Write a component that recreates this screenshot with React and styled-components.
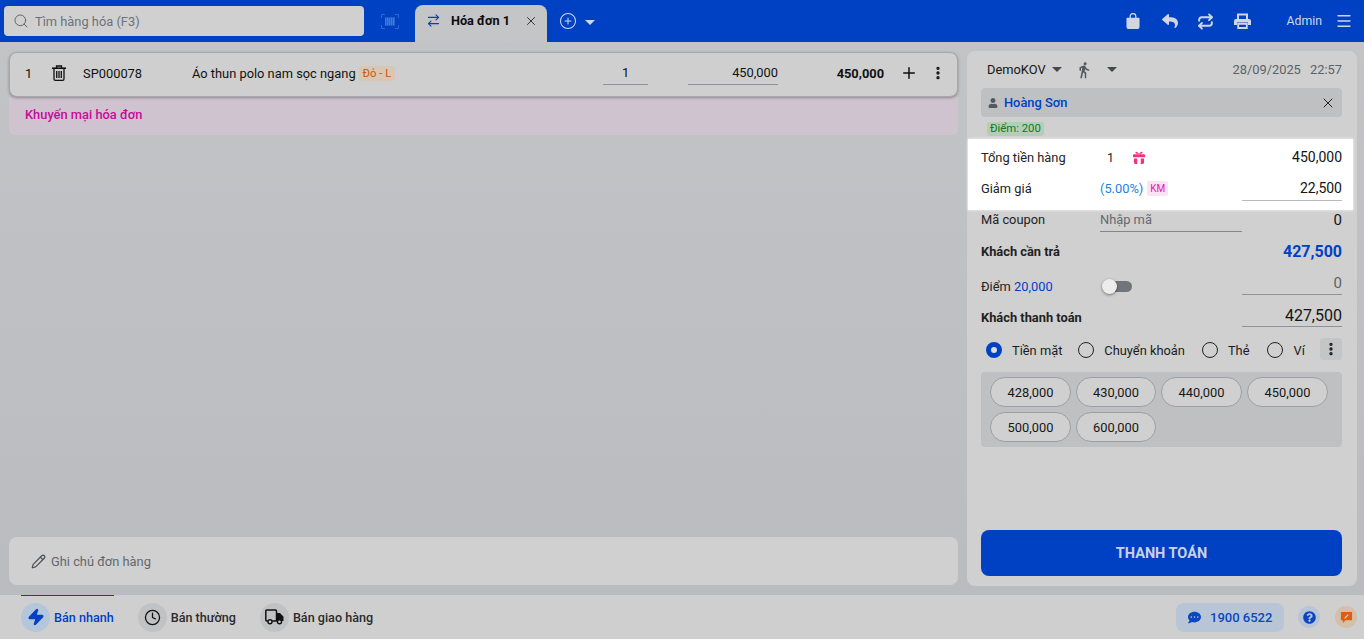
import React from 'react';
import styled, { createGlobalStyle } from 'styled-components';
import {
  Search, ArrowRightLeft, X, CirclePlus, Menu, Plus, EllipsisVertical, Pencil, Clock, Repeat, Zap,
} from 'lucide-react';
import { FaReply, FaUser, FaCommentDots, FaQuestionCircle } from 'react-icons/fa';
import { MdDirectionsWalk } from 'react-icons/md';

const GlobalStyle = createGlobalStyle`
  html, body { margin: 0; padding: 0; height: 100%; overflow: hidden; }
  body { font-family: Roboto, "Liberation Sans", sans-serif; font-size: 12.85px; color: #111; }
  * { box-sizing: border-box; }
`;

const Page = styled.div`
  width: 1364px;
  height: 639px;
  display: flex;
  flex-direction: column;
  background: linear-gradient(#c3c4c6, #babbbe);
`;

const Header = styled.header`
  height: 42px;
  flex: none;
  background: #0041c4;
  display: flex;
  align-items: flex-start;
  padding: 6px 0 0 4px;
`;

const SearchBox = styled.div`
  width: 360px;
  height: 30px;
  background: #d0d0d0;
  border-radius: 4px;
  display: flex;
  align-items: center;
  gap: 6px;
  padding-left: 9px;
  color: #6d7278;
  svg { color: #5f656b; }
`;

const BarcodeWrap = styled.div`
  width: 51px;
  height: 30px;
  display: flex;
  align-items: center;
  justify-content: center;
`;

const Tab = styled.div`
  width: 132px;
  height: 37px;
  margin-top: -1px;
  background: #c4c5c7;
  border-radius: 8px 8px 0 0;
  display: flex;
  align-items: center;
  padding: 0 9px 6px 11px;
  font-weight: 700;
  font-size: 12.7px;
  color: #0c0c0c;
  svg:first-child { color: #0041c4; margin-right: 10px; }
  svg:last-child { color: #222; margin-left: auto; }
`;

const AddTab = styled.div`
  display: flex;
  align-items: center;
  gap: 8px;
  margin: 6px 0 0 12px;
  color: #d0d6e8;
`;

const Caret = styled.span`
  width: 0;
  height: 0;
  flex: none;
  margin: ${p => p.$m || 0};
  border-left: 5px solid transparent;
  border-right: 5px solid transparent;
  border-top: 5px solid ${p => p.$color || '#44484d'};
`;

const HeadRight = styled.div`
  margin-left: auto;
  display: flex;
  align-items: center;
  height: 30px;
  color: #d2d6e2;
  padding-right: 11px;
`;

const HeadIcon = styled.span`
  display: flex;
  width: 20px;
  justify-content: center;
  margin-right: ${p => p.$gap}px;
`;

const AdminText = styled.span`
  font-size: 12.3px;
  margin-right: 13px;
`;

const Content = styled.main`
  flex: 1;
  display: flex;
  min-height: 0;
  padding: 9px 7px 9px 9px;
  gap: 9px;
`;

const LeftCol = styled.section`
  width: 949px;
  display: flex;
  flex-direction: column;
`;

const ItemRow = styled.div`
  height: 45px;
  margin-top: 1px;
  flex: none;
  background: #cfcfcf;
  border-radius: 8px;
  border: 1px solid #a6a8ac;
  box-shadow: 0 1px 3px rgba(0, 0, 0, 0.3);
  display: flex;
  align-items: center;
  padding: 0 0 3px 15px;
  position: relative;
`;

const Cell = styled.div`
  width: ${p => p.$w}px;
  flex: none;
  display: flex;
  align-items: center;
  justify-content: ${p => p.$end ? 'flex-end' : 'flex-start'};
  font-weight: ${p => p.$bold ? 700 : 400};
`;

const UnderCell = styled.div`
  width: ${p => p.$w}px;
  margin-left: ${p => p.$ml || 0}px;
  height: 24px;
  flex: none;
  border-bottom: 1px solid #8f9398;
  text-align: ${p => p.$align};
  line-height: 24px;
`;

const VariantTag = styled.span`
  background: #d9c7b6;
  color: #c9590a;
  border-radius: 3px;
  font-size: 11.2px;
  padding: 1px 4px;
  margin-left: 3px;
`;

const Promo = styled.div`
  height: 38px;
  flex: none;
  background: #cfc3cf;
  border-radius: 0 0 6px 6px;
  color: #c80a9a;
  font-weight: 500;
  display: flex;
  align-items: center;
  padding: 0 0 4px 16px;
`;

const Note = styled.div`
  margin: auto 0 1px;
  height: 48px;
  background: #d0d0d0;
  border-radius: 8px;
  display: flex;
  align-items: center;
  gap: 5px;
  padding-left: 22px;
  color: #62676d;
  svg { color: #4e5358; }
`;

const RightCol = styled.aside`
  width: 390px;
  background: #d0d0d0;
  border-radius: 8px;
  padding: 0 15px 10px 14px;
  display: flex;
  flex-direction: column;
`;

const SellerRow = styled.div`
  height: 37px;
  display: flex;
  align-items: center;
  padding-left: 6px;
  color: #161616;
  svg { color: #55595f; margin-left: 13px; }
`;

const DateText = styled.span`
  margin-left: auto;
  color: #5c6167;
  word-spacing: 6px;
`;

const Customer = styled.div`
  height: 29px;
  background: #bfc0c2;
  border-radius: 4px;
  display: flex;
  align-items: center;
  padding: 0 6px 0 7px;
  gap: 6px;
  color: #0041c4;
  font-weight: 500;
  svg:first-child { color: #55595f; }
  svg:last-child { margin-left: auto; color: #222; }
`;

const Points = styled.span`
  align-self: flex-start;
  margin: 5px 0 0 6px;
  height: 14px;
  line-height: 14px;
  padding: 0 3px;
  background: #b5cdb8;
  color: #0a7a24;
  font-size: 11.3px;
  border-radius: 3px;
`;

const Spotlight = styled.div`
  background: #fff;
  margin: 3px -11px 0 -13px;
  padding: 0 11px 0 13px;
  height: 71px;
  box-shadow: 0 0 3px rgba(255, 255, 255, 0.8);
`;

const SumRow = styled.div`
  display: grid;
  grid-template-columns: 119px 142px 100px;
  align-items: center;
  height: ${p => p.$h}px;
  margin-top: ${p => p.$mt || 0}px;
  padding-bottom: ${p => p.$pb || 0}px;
`;

const Label = styled.span`
  font-weight: ${p => p.$bold ? 700 : 400};
  color: #222;
`;

const Blue = styled.span`
  color: #0041c4;
`;

const Middle = styled.div`
  display: flex;
  align-items: center;
  color: #1d1d1d;
`;

const Qty = styled.span`
  width: 33px;
  padding-left: 7px;
  font-size: 12.5px;
`;

const Percent = styled.span`
  color: #1e7fe0;
`;

const KmTag = styled.span`
  background: #fbe3f5;
  color: #e515ae;
  font-size: 10px;
  padding: 2px 3px;
  border-radius: 2px;
  margin-left: 4px;
`;

const Value = styled.div`
  text-align: right;
  font-size: ${p => p.$size || 14}px;
  font-weight: ${p => p.$bold ? 700 : 400};
  color: ${p => p.$color || '#141414'};
  margin: ${p => p.$mt || 0}px 0 ${p => p.$mb || 0}px;
  padding-bottom: ${p => p.$pb || 0}px;
  ${p => p.$line && `border-bottom: 1px solid ${p.$line};`}
`;

const CouponInput = styled.div`
  height: 25px;
  line-height: 25px;
  border-bottom: 1px solid #83878c;
  color: #64696f;
`;

const SwitchTrack = styled.div`
  position: relative;
  width: 26px;
  height: 11px;
  margin-left: 6px;
  border-radius: 6px;
  background: #70757b;
`;

const SwitchThumb = styled.span`
  position: absolute;
  left: -4px;
  top: -2px;
  width: 15px;
  height: 15px;
  border-radius: 50%;
  background: #ececec;
  box-shadow: 0 1px 3px rgba(0, 0, 0, 0.45);
`;

const Methods = styled.div`
  display: flex;
  align-items: center;
  height: 36px;
  padding-left: 5px;
  margin-top: 2px;
  color: #1b1b1b;
`;

const Radio = styled.span`
  width: 16px;
  height: 16px;
  border-radius: 50%;
  flex: none;
  margin: 0 10px 0 ${p => p.$ml || 0}px;
  border: ${p => p.$on ? '5px solid #0041c4' : '1.3px solid #222'};
  background: ${p => p.$on ? '#dcdcdc' : 'transparent'};
`;

const MoreBtn = styled.span`
  margin: -2px 0 0 auto;
  width: 22px;
  height: 22px;
  background: #c4c5c7;
  border-radius: 3px;
  display: flex;
  align-items: center;
  justify-content: center;
`;

const ChipBox = styled.div`
  margin-top: 4px;
  height: 75px;
  background: #bfc0c2;
  border-radius: 4px;
  padding: 5px 9px;
  display: grid;
  grid-template-columns: 81px 80px 81px 81px;
  grid-auto-rows: 30px;
  gap: 5px;
`;

const Chip = styled.div`
  border: 1px solid #9d9fa3;
  border-radius: 15px;
  background: #d0d0d0;
  display: flex;
  align-items: center;
  justify-content: center;
  color: #161616;
`;

const PayButton = styled.button`
  margin-top: auto;
  height: 46px;
  border: none;
  border-radius: 8px;
  background: #0041c4;
  color: #c9d2e4;
  font-family: inherit;
  font-weight: 700;
  font-size: 14.5px;
`;

const Footer = styled.footer`
  height: 44px;
  flex: none;
  background: #cfcfcf;
  display: flex;
  align-items: center;
  padding: 0 7px 0 21px;
  position: relative;
`;

const ActiveLine = styled.span`
  position: absolute;
  left: 21px;
  top: 0;
  width: 93px;
  height: 1px;
  background: #0041c4;
`;

const Mode = styled.div`
  display: flex;
  align-items: center;
  gap: 4px;
  margin-right: 24px;
  font-size: 12.6px;
  font-weight: 500;
  color: ${p => p.$active ? '#0041c4' : '#2b2b2b'};
`;

const ModeIcon = styled.span`
  width: 29px;
  height: 29px;
  border-radius: 50%;
  display: flex;
  align-items: center;
  justify-content: center;
  background: ${p => p.$active ? '#b3c6dc' : '#c1c2c3'};
  color: ${p => p.$active ? '#0041c4' : '#111'};
`;

const Hotline = styled.div`
  margin-left: auto;
  width: 108px;
  height: 29px;
  border-radius: 8px;
  background: #b7c5d6;
  color: #0d47c0;
  display: flex;
  align-items: center;
  gap: 9px;
  padding-left: 12px;
  font-weight: 500;
  font-size: 13px;
`;

const RoundBtn = styled.span`
  width: 22px;
  height: 22px;
  border-radius: 50%;
  margin-left: ${p => p.$ml}px;
  background: ${p => p.$bg};
  color: ${p => p.$color};
  display: flex;
  align-items: center;
  justify-content: center;
`;

const Barcode = () => (
  <svg width="18" height="15" viewBox="0 0 18 15" fill="none" stroke="#2a68cc" strokeWidth="1">
    <path d="M.5 4V.5H4M14 .5h3.5V4M17.5 11v3.5H14M4 14.5H.5V11" />
    <rect x="4" y="3.5" width="10" height="8" fill="#3f7cd6" stroke="none" />
    <path d="M5.5 3.5v8M7.5 3.5v8M9.5 3.5v8M11.5 3.5v8M13.5 3.5v8" stroke="#1450c8" strokeWidth=".6" />
  </svg>
);

const Bag = () => (
  <svg width="14" height="16" viewBox="0 0 15 17">
    <path d="M4.5 6V3.5a3 3 0 0 1 6 0V6" fill="none" stroke="currentColor" strokeWidth="1.4" />
    <path d="M1.5 5h12a1 1 0 0 1 1 1v9a2 2 0 0 1-2 2h-10a2 2 0 0 1-2-2V6a1 1 0 0 1 1-1z" fill="currentColor" />
  </svg>
);

const Printer = () => (
  <svg width="17" height="16" viewBox="0 0 17 16">
    <path d="M4 6V1.5h9V6" fill="none" stroke="currentColor" strokeWidth="2" />
    <path d="M2 6h13a2 2 0 0 1 2 2v4h-3V9.5H3V12H0V8a2 2 0 0 1 2-2z" fill="currentColor" />
    <path d="M4.2 10.8h8.6V15H4.2z" fill="none" stroke="currentColor" strokeWidth="1.8" />
  </svg>
);

const Trash = () => (
  <svg width="16" height="16" viewBox="0 0 16 16" fill="none" stroke="#111" strokeWidth="1.3">
    <path d="M1 3.2h14" strokeWidth="1.6" />
    <path d="M5.5 3V1h5v2" />
    <path d="M3 3.5V14a1.3 1.3 0 0 0 1.3 1.3h7.4A1.3 1.3 0 0 0 13 14V3.5" />
    <path d="M5.7 6v7M8 6v7M10.3 6v7" />
  </svg>
);

const Gift = () => (
  <svg width="12" height="13" viewBox="0 0 13 14" fill="#f4307f">
    <path d="M6.5 3.2C5 1 3.6.2 2.8 1c-.8.9.6 2 3 2.3zM6.5 3.2C8 1 9.4.2 10.2 1c.8.9-.6 2-3 2.3z" />
    <path d="M1 3.6h11a1 1 0 0 1 1 1v2.2H0V4.6a1 1 0 0 1 1-1z" />
    <path d="M1 8h3.6v6H2.5A1.5 1.5 0 0 1 1 12.5zM8.4 8H12v4.5a1.5 1.5 0 0 1-1.5 1.5H8.4z" />
  </svg>
);

const TruckIcon = () => (
  <svg width="19" height="16" viewBox="0 0 19 16">
    <path d="M11.5 12H1.8a1 1 0 0 1-1-1V2a1 1 0 0 1 1-1h8.7a1 1 0 0 1 1 1z" fill="none" stroke="#111" strokeWidth="1.5" />
    <path d="M11.5 4H15l3.5 3.8V12h-7z" fill="#111" />
    <circle cx="5" cy="12.8" r="2" fill="#cfcfcf" stroke="#111" strokeWidth="1.4" />
    <circle cx="14.5" cy="12.8" r="2" fill="#cfcfcf" stroke="#111" strokeWidth="1.4" />
  </svg>
);

const ReportIcon = () => (
  <svg width="13" height="13" viewBox="0 0 14 14">
    <path d="M1 1h12v9H6l-3 3v-3H1z" fill="#d9600f" />
    <path d="M5 8l4-4" stroke="#f5d9c2" strokeWidth="1.2" />
  </svg>
);

const amounts = ['428,000', '430,000', '440,000', '450,000', '500,000', '600,000'];

export default function App() {
  return (
    <Page>
      <GlobalStyle />
      <Header>
        <SearchBox>
          <Search size={16} strokeWidth={1.5} />
          Tìm hàng hóa (F3)
        </SearchBox>
        <BarcodeWrap><Barcode /></BarcodeWrap>
        <Tab>
          <ArrowRightLeft size={15} strokeWidth={1.8} />
          Hóa đơn 1
          <X size={14} strokeWidth={1.5} />
        </Tab>
        <AddTab>
          <CirclePlus size={18} strokeWidth={1.4} />
          <Caret $color="#d0d6e8" $m="3px 0 0 0" />
        </AddTab>
        <HeadRight>
          <HeadIcon $gap={17}><Bag /></HeadIcon>
          <HeadIcon $gap={15}><FaReply size={16} /></HeadIcon>
          <HeadIcon $gap={17}><Repeat size={17} strokeWidth={2.7} /></HeadIcon>
          <HeadIcon $gap={34}><Printer /></HeadIcon>
          <AdminText>Admin</AdminText>
          <Menu size={18} strokeWidth={1.7} />
        </HeadRight>
      </Header>
      <Content>
        <LeftCol>
          <ItemRow>
            <Cell $w={26}>1</Cell>
            <Cell $w={32}><Trash /></Cell>
            <Cell $w={109}>SP000078</Cell>
            <Cell $w={411}>
              Áo thun polo nam sọc ngang
              <VariantTag>Đỏ - L</VariantTag>
            </Cell>
            <UnderCell $w={45} $align="center">1</UnderCell>
            <UnderCell $w={90} $ml={40} $align="right">450,000</UnderCell>
            <Cell $w={106} $end $bold>450,000</Cell>
            <Cell $w={34} $end><Plus size={18} strokeWidth={2} /></Cell>
            <Cell $w={28} $end><EllipsisVertical size={16} strokeWidth={3} /></Cell>
          </ItemRow>
          <Promo>Khuyến mại hóa đơn</Promo>
          <Note>
            <Pencil size={15} strokeWidth={2} />
            Ghi chú đơn hàng
          </Note>
        </LeftCol>
        <RightCol>
          <SellerRow>
            DemoKOV
            <Caret $m="0 0 0 6px" />
            <MdDirectionsWalk size={18} />
            <Caret $m="0 0 0 14px" />
            <DateText>28/09/2025 22:57</DateText>
          </SellerRow>
          <Customer>
            <FaUser size={10} />
            Hoàng Sơn
            <X size={16} strokeWidth={1.5} />
          </Customer>
          <Points>Điểm: 200</Points>
          <Spotlight>
            <SumRow $h={36}>
              <Label>Tổng tiền hàng</Label>
              <Middle><Qty>1</Qty><Gift /></Middle>
              <Value>450,000</Value>
            </SumRow>
            <SumRow $h={26}>
              <Label>Giảm giá</Label>
              <Middle><Percent>(5.00%)</Percent><KmTag>KM</KmTag></Middle>
              <Value $line="#b9b9b9" $mt={5} $pb={4}>22,500</Value>
            </SumRow>
          </Spotlight>
          <SumRow $h={27} $mt={-3} $pb={2}>
            <Label>Mã coupon</Label>
            <CouponInput>Nhập mã</CouponInput>
            <Value $size={15}>0</Value>
          </SumRow>
          <SumRow $h={34}>
            <Label $bold>Khách cần trả</Label>
            <span />
            <Value $size={16} $bold $color="#0041c4">427,500</Value>
          </SumRow>
          <SumRow $h={36}>
            <Label>Điểm <Blue>20,000</Blue></Label>
            <Middle><SwitchTrack><SwitchThumb /></SwitchTrack></Middle>
            <Value $size={15} $color="#5c6167" $line="#8f9398" $mb={3} $pb={2}>0</Value>
          </SumRow>
          <SumRow $h={26}>
            <Label $bold>Khách thanh toán</Label>
            <span />
            <Value $size={16} $line="#8f9398" $mb={2} $pb={1}>427,500</Value>
          </SumRow>
          <Methods>
            <Radio $on />Tiền mặt
            <Radio $ml={16} />Chuyển khoản
            <Radio $ml={17} />Thẻ
            <Radio $ml={18} />Ví
            <MoreBtn><EllipsisVertical size={16} strokeWidth={3} /></MoreBtn>
          </Methods>
          <ChipBox>
            {amounts.map(a => <Chip key={a}>{a}</Chip>)}
          </ChipBox>
          <PayButton>THANH TOÁN</PayButton>
        </RightCol>
      </Content>
      <Footer>
        <ActiveLine />
        <Mode $active>
          <ModeIcon $active><Zap size={18} fill="currentColor" /></ModeIcon>
          Bán nhanh
        </Mode>
        <Mode>
          <ModeIcon><Clock size={17} strokeWidth={1.8} /></ModeIcon>
          Bán thường
        </Mode>
        <Mode>
          <ModeIcon><TruckIcon /></ModeIcon>
          Bán giao hàng
        </Mode>
        <Hotline>
          <FaCommentDots size={13} />
          1900 6522
        </Hotline>
        <RoundBtn $ml={14} $bg="#b7c5d6" $color="#0d47c0"><FaQuestionCircle size={13} /></RoundBtn>
        <RoundBtn $ml={15} $bg="#d4bfa9" $color="#d9600f"><ReportIcon /></RoundBtn>
      </Footer>
    </Page>
  );
}
